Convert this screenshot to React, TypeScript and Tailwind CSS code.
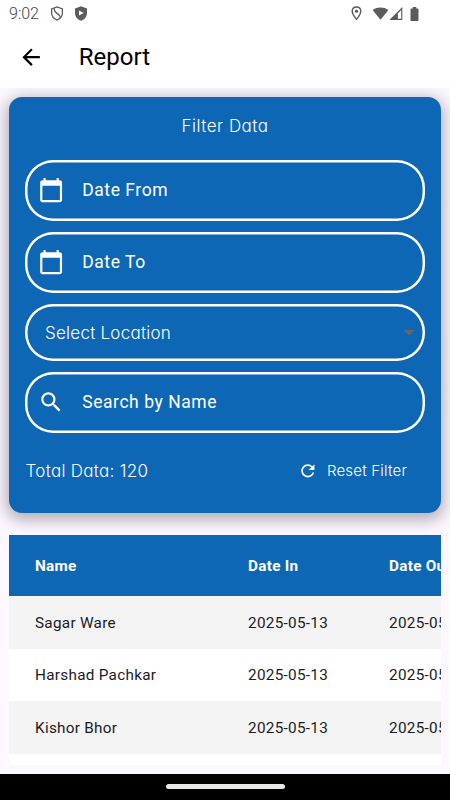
import { clsx } from 'clsx';
import type { IconType } from 'react-icons';
import {
  MdArrowBack,
  MdArrowDropDown,
  MdCalendarToday,
  MdRefresh,
  MdSearch,
} from 'react-icons/md';

type Row = { name: string; dateIn: string; dateOut: string };

const rows: Row[] = [
  { name: 'Sagar Ware', dateIn: '2025-05-13', dateOut: '2025-05-13' },
  { name: 'Harshad Pachkar', dateIn: '2025-05-13', dateOut: '2025-05-13' },
  { name: 'Kishor Bhor', dateIn: '2025-05-13', dateOut: '2025-05-13' },
];

const rounded = "font-['Inter',sans-serif] font-light [font-feature-settings:'cv11']";
const outlined = 'flex items-center rounded-[28px] shadow-[inset_0_0_0_2.5px_#fff]';

function StatusBar() {
  return (
    <div className="flex h-[27px] shrink-0 items-center bg-white pr-[31px] pl-[9px] text-[#5c5c5c]">
      <span className="w-[41px] text-[16px] leading-none font-light text-[#444]">9:02</span>
      <svg className="h-[15px] w-[14px]" viewBox="0 0 14 15" fill="none" stroke="currentColor">
        <path d="M7 .9 12.4 2.9v4.2c0 3.2-2.1 5.7-5.4 7-3.3-1.3-5.4-3.8-5.4-7V2.9Z" strokeWidth="1.3" />
        <path d="M4.3 2.2v1.6c0 3.6 6.3 4.2 6.1 7.8" strokeWidth="1.4" />
      </svg>
      <svg className="ml-[10px] h-[15px] w-[14px]" viewBox="0 0 14 15">
        <path d="M7 .3 13 2.4v4.5c0 3.5-2.3 6.4-6 7.8-3.7-1.4-6-4.3-6-7.8V2.4Z" fill="currentColor" />
        <path d="M5 4.4v5.2L9.7 7Z" fill="#fff" />
      </svg>
      <svg className="ml-auto h-[15px] w-[11px]" viewBox="0 0 11 15">
        <path
          d="M5.5 1C3 1 1.2 2.8 1.2 5.2c0 3 4.3 8 4.3 8s4.3-5 4.3-8C9.8 2.8 8 1 5.5 1Z"
          fill="none"
          stroke="currentColor"
          strokeWidth="1.4"
        />
        <circle cx="5.5" cy="5.2" r="1.6" fill="currentColor" />
      </svg>
      <svg className="ml-[10px] h-[14px] w-[17px]" viewBox="0 0 17 14" fill="currentColor">
        <path d="M.6 2.9C5 -.4 12 -.4 16.4 2.9L8.5 12.8Z" />
      </svg>
      <svg className="h-[14px] w-[14px]" viewBox="0 0 14 14">
        <path d="M.3 13 13.3 0v13Z" fill="currentColor" />
        <path d="M8.9 6.400 12.200 3.100v8.700H8.900Z" fill="#fff" />
      </svg>
      <svg className="ml-[7px] h-[14px] w-[9px]" viewBox="0 0 9 14" fill="currentColor">
        <path d="M2.7 0h3.6v1.4h1.2c.6 0 1 .4 1 1V13c0 .6-.4 1-1 1h-6c-.6 0-1-.4-1-1V2.4c0-.6.4-1 1-1h1.2Z" />
      </svg>
    </div>
  );
}

function Field({ label, icon: Icon }: { label: string; icon: IconType }) {
  return (
    <div className={clsx(outlined, 'h-[61px] pl-[13px]')}>
      <Icon size={26.25} className="mt-px" />
      <span className="ml-[18px] text-[17.5px] tracking-[0.55px]">{label}</span>
    </div>
  );
}

function FilterCard() {
  return (
    <section className="mx-[9px] mt-[9px] flex h-[416.5px] shrink-0 flex-col rounded-[13px] bg-[#0e67b5] px-[16px] text-white shadow-[0_4px_16px_3px_rgba(0,0,0,0.3)]">
      <h2 className={clsx(rounded, 'mt-[16px] h-[47px] text-center text-[17px] leading-[26px] tracking-[0.5px]')}>
        Filter Data
      </h2>
      <div className="flex flex-col gap-[11px]">
        <Field label="Date From" icon={MdCalendarToday} />
        <Field label="Date To" icon={MdCalendarToday} />
        <div
          className={clsx(
            outlined,
            rounded,
            'h-[57px] justify-between pr-[2.5px] pl-[20px] text-[17px] tracking-[0.25px]',
          )}
        >
          <span className="pt-[3px]">Select Location</span>
          <MdArrowDropDown size={26.25} className="mt-px text-[#666]" />
        </div>
        <Field label="Search by Name" icon={MdSearch} />
      </div>
      <div className={clsx(rounded, 'mt-[25.5px] flex h-[26px] items-center justify-between pr-[18px] pl-[0.5px]')}>
        <span className="pt-px text-[17px] tracking-[0.3px]">Total Data: 120</span>
        <button className="flex items-center gap-[9px] text-[15px] tracking-[0.2px]">
          <MdRefresh size={19.7} />
          Reset Filter
        </button>
      </div>
    </section>
  );
}

function ReportTable() {
  return (
    <div className="mx-[9px] mt-[22px] h-[230px] shrink-0 overflow-hidden bg-white">
      <table className="w-[530px] table-fixed border-collapse text-left text-[15.3px] tracking-[0.28px] text-[#1c1b1f]">
        <colgroup>
          <col className="w-[239px]" />
          <col className="w-[141px]" />
          <col />
        </colgroup>
        <thead>
          <tr className="h-[61px] bg-[#0e67b5] text-white">
            <th className="p-0 pt-[2px] pl-[26px] font-bold">Name</th>
            <th className="p-0 pt-[2px] font-bold">Date In</th>
            <th className="p-0 pt-[2px] font-bold">Date Out</th>
          </tr>
        </thead>
        <tbody>
          {rows.map((row) => (
            <tr key={row.name} className="h-[52.5px] odd:bg-[#f4f4f4]">
              <td className="p-0 pt-[2px] pl-[26px]">{row.name}</td>
              <td className="p-0 pt-[2px]">{row.dateIn}</td>
              <td className="p-0 pt-[2px]">{row.dateOut}</td>
            </tr>
          ))}
        </tbody>
      </table>
    </div>
  );
}

export default function App() {
  return (
    <div className="flex h-[800px] w-[450px] flex-col overflow-hidden bg-[#fdf7ff] font-['Roboto',sans-serif]">
      <StatusBar />
      <header className="flex h-[60.5px] shrink-0 items-center bg-white pl-[17.5px] text-black">
        <MdArrowBack size={26.25} />
        <h1 className="ml-[35px] text-[24px] leading-none">Report</h1>
      </header>
      {/* clips the card shadow at the app bar */}
      <main className="flex min-h-0 flex-1 flex-col overflow-hidden">
        <FilterCard />
        <ReportTable />
      </main>
      <footer className="flex h-[26.5px] shrink-0 items-center justify-center bg-black">
        <div className="h-[5px] w-[119px] rounded-full bg-[#e8e8e8]" />
      </footer>
    </div>
  );
}
